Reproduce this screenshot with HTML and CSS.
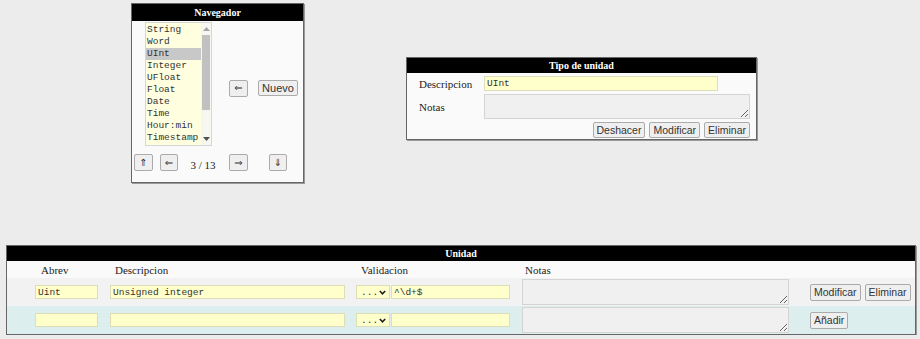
FILE: index.html
```html
<!DOCTYPE html>
<html lang="es">
<head>
    <meta charset="UTF-8">
    <title>Tipos de unidad</title>
    <link rel="stylesheet" href="styles.css">
</head>
<body>

<div class="top">
    <section class="panel nav">
        <h2 class="panel__title nav__title">Navegador</h2>
        <div class="nav__grid">
            <div class="list">
                <div class="list__items">
                    <div class="list__item">String</div>
                    <div class="list__item">Word</div>
                    <div class="list__item list__item--selected">UInt</div>
                    <div class="list__item">Integer</div>
                    <div class="list__item">UFloat</div>
                    <div class="list__item">Float</div>
                    <div class="list__item">Date</div>
                    <div class="list__item">Time</div>
                    <div class="list__item">Hour:min</div>
                    <div class="list__item">Timestamp</div>
                </div>
                <div class="list__scroll">
                    <svg class="list__arrow" width="7" height="4" viewBox="0 0 7 4"><path d="M0 4 L3.5 0 L7 4 Z" fill="#a3a3a3"/></svg>
                    <div class="list__thumb"></div>
                    <svg class="list__arrow list__arrow--down" width="7" height="4" viewBox="0 0 7 4"><path d="M0 0 L3.5 4 L7 0 Z" fill="#505050"/></svg>
                </div>
            </div>
            <button class="btn btn--arrow nav__back">&#8656;</button>
            <button class="btn nav__new">Nuevo</button>

            <button class="btn btn--arrow">&#8657;</button>
            <button class="btn btn--arrow">&#8656;</button>
            <span class="nav__count">3 / 13</span>
            <button class="btn btn--arrow">&#8658;</button>
            <button class="btn btn--arrow">&#8659;</button>
        </div>
    </section>

    <section class="panel tipo">
        <h2 class="panel__title">Tipo de unidad</h2>
        <div class="tipo__form">
            <label class="tipo__label" for="tipo-desc">Descripcion</label>
            <input class="field field--tipo" id="tipo-desc" type="text" value="UInt">
            <label class="tipo__label" for="tipo-notas">Notas</label>
            <textarea class="notes notes--tipo" id="tipo-notas" readonly></textarea>
            <div class="tipo__actions">
                <button class="btn">Deshacer</button>
                <button class="btn">Modificar</button>
                <button class="btn">Eliminar</button>
            </div>
        </div>
    </section>
</div>

<section class="panel unidad">
    <h2 class="panel__title">Unidad</h2>
    <div class="unidad__row unidad__row--head">
        <span class="unidad__col">Abrev</span>
        <span class="unidad__col">Descripcion</span>
        <span class="unidad__col">Validacion</span>
        <span class="unidad__col unidad__col--notas">Notas</span>
    </div>
    <div class="unidad__row unidad__row--item">
        <div><input class="field field--abrev" type="text" value="Uint"></div>
        <div><input class="field field--desc" type="text" value="Unsigned integer"></div>
        <div class="valid">
            <span class="valid__select">...<svg width="7" height="5" viewBox="0 0 7 5"><path d="M0.8 1 L3.5 3.8 L6.2 1" fill="none" stroke="#222" stroke-width="1.6"/></svg></span>
            <input class="field field--regex" type="text" value="^\d+$">
        </div>
        <div><textarea class="notes notes--unidad" readonly></textarea></div>
        <div class="unidad__actions">
            <button class="btn btn--row">Modificar</button>
            <button class="btn btn--row">Eliminar</button>
        </div>
    </div>
    <div class="unidad__row unidad__row--new">
        <div><input class="field field--abrev" type="text" value=""></div>
        <div><input class="field field--desc" type="text" value=""></div>
        <div class="valid">
            <span class="valid__select">...<svg width="7" height="5" viewBox="0 0 7 5"><path d="M0.8 1 L3.5 3.8 L6.2 1" fill="none" stroke="#222" stroke-width="1.6"/></svg></span>
            <input class="field field--regex" type="text" value="">
        </div>
        <div><textarea class="notes notes--unidad" readonly></textarea></div>
        <div class="unidad__actions">
            <button class="btn btn--row">A&ntilde;adir</button>
        </div>
    </div>
</section>

</body>
</html>
```

FILE: styles.css
```css
* {
    box-sizing: border-box;
}

body {
    margin: 0;
    background: #ececec;
    font-family: "Liberation Serif", "Times New Roman", serif;
    color: #222;
}

.top {
    display: flex;
    align-items: flex-start;
    padding: 3px 0 0 131px;
}

.panel {
    background: #fafafa;
    border: 1px solid #666;
    box-shadow: 1px 1px 0 #999;
}
.panel__title {
    margin: 0;
    background: #000;
    color: #fff;
    font-size: 10px;
    font-weight: bold;
    text-align: center;
    height: 15px;
    line-height: 15px;
}

/* buttons */
.btn {
    font-family: "Liberation Sans", Arial, sans-serif;
    font-size: 10.5px;
    color: #333;
    background: #efefef;
    border: 1px solid #ababab;
    border-radius: 2px;
    height: 16px;
    padding: 0 3px;
    line-height: 14px;
}
.btn--arrow {
    font-family: "DejaVu Sans", sans-serif;
    font-size: 10px;
    color: #333;
    height: 17px;
    padding: 0 4px;
}

/* inputs */
.field {
    background: #ffffcc;
    border: 1px solid #ddddb8;
    font-family: "Liberation Mono", "Courier New", monospace;
    font-size: 9.5px;
    color: #333;
    height: 14px;
    padding: 0 2px;
    margin: 0;
    outline: none;
}
.notes {
    display: block;
    background: #f0f0f0;
    border: 1px solid #d4d4d4;
    margin: 0;
    padding: 0;
    outline: none;
}

/* navegador */
.nav {
    width: 173px;
    height: 180px;
}
.nav__title {
    height: 17px;
    line-height: 17px;
}
.nav__grid {
    display: grid;
    grid-template-columns: 23px 28px 40px 31px 48px;
    grid-template-rows: 124px 17px;
    row-gap: 8px;
    margin-top: 1px;
    justify-items: center;
}
.nav__back,
.nav__new {
    align-self: center;
    margin-top: 8px;
}
.nav__new {
    height: 16px;
    font-size: 11px;
}
.nav__count {
    align-self: end;
    font-size: 11px;
    line-height: 12px;
}

.list {
    grid-column: 1 / 4;
    justify-self: start;
    margin-left: 13px;
    width: 67px;
    height: 124px;
    display: flex;
    background: #ffffe0;
    border: 1px solid #d6d6d6;
}
.list__items {
    flex: 1;
    padding-top: 1px;
    overflow: hidden;
}
.list__item {
    height: 12px;
    line-height: 12px;
    padding-left: 1px;
    font-family: "Liberation Mono", "Courier New", monospace;
    font-size: 9.5px;
    color: #333;
    white-space: nowrap;
}
.list__item--selected {
    background: #c8c8c8;
}
.list__scroll {
    width: 10px;
    display: flex;
    flex-direction: column;
    align-items: center;
    background: #f7f7f2;
}
.list__arrow {
    margin-top: 4px;
    flex: none;
}
.list__arrow--down {
    margin-top: auto;
    margin-bottom: 4px;
}
.list__thumb {
    width: 8px;
    height: 75px;
    margin-top: 4px;
    background: #c1c1c1;
}

/* tipo de unidad */
.tipo {
    width: 351px;
    margin: 54px 0 0 102px;
}
.tipo__form {
    display: grid;
    grid-template-columns: 77px 266px;
    row-gap: 3px;
    padding: 3px 0 1px;
    align-items: center;
}
.tipo__label {
    padding-left: 12px;
    font-size: 11px;
}
.field--tipo {
    width: 234px;
    height: 15px;
}
.notes--tipo {
    width: 266px;
    height: 25px;
}
.tipo__actions {
    grid-column: 1 / 3;
    display: flex;
    justify-content: flex-end;
    gap: 4px;
}

/* unidad */
.unidad {
    width: 910px;
    margin: 62px 0 0 6px;
}
.unidad__row {
    display: grid;
    grid-template-columns: 75px 246px 166px 288px auto;
    align-items: center;
    padding-left: 28px;
}
.unidad__row--head {
    height: 17px;
    font-size: 11px;
}
.unidad__col {
    padding-left: 5px;
}
.unidad__col:first-child {
    padding-left: 6px;
}
.unidad__col--notas {
    padding-left: 3px;
}
.unidad__row--item {
    height: 28px;
    background: #f2f2f2;
}
.unidad__row--new {
    height: 28px;
    background: #ddeeee;
}
.field--abrev {
    display: block;
    width: 63px;
}
.field--desc {
    display: block;
    width: 235px;
}
.valid {
    display: flex;
    gap: 1px;
}
.valid__select {
    display: flex;
    align-items: center;
    justify-content: space-between;
    width: 34px;
    height: 14px;
    padding: 0 3px 0 4px;
    background: #ffffcc;
    border: 1px solid #ddddb8;
    font-family: "Liberation Mono", "Courier New", monospace;
    font-size: 9.5px;
    color: #333;
}
.field--regex {
    width: 119px;
}
.notes--unidad {
    width: 267px;
    height: 26px;
}
.unidad__actions {
    display: flex;
    gap: 4px;
}
.btn--row {
    height: 17px;
    font-size: 10.5px;
}
```
